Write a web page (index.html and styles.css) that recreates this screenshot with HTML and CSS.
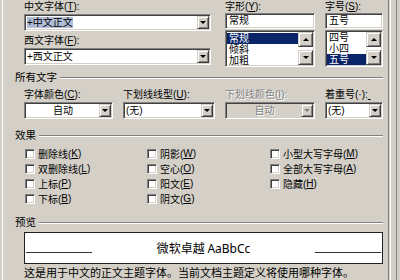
FILE: index.html
```html
<!DOCTYPE html>
<html>
<head>
<meta charset="utf-8">
<title>字体</title>
<link rel="stylesheet" href="styles.css">
</head>
<body>

<div class="dlg">
<div class="page">

<!-- polices -------------------------------------------------->
<div class="fonts">
	<div class="c1">
		<div class="lbl">中文字体(<u>T</u>):</div>
		<div class="combo"><span class="val"><span class="sel">+中文正文</span></span><span class="btn"><i></i></span></div>
		<div class="lbl lbl2">西文字体(<u>F</u>):</div>
		<div class="combo"><span class="val">+西文正文</span><span class="btn"><i></i></span></div>
	</div>
	<div class="c2">
		<div class="lbl">字形(<u>Y</u>):</div>
		<div class="edit">常规</div>
		<div class="list">
			<div class="items"><div class="hi">常规</div><div>倾斜</div><div>加粗</div></div>
			<div class="sb"><span class="btn"><i class="up"></i></span><span class="btn"><i></i></span></div>
		</div>
	</div>
	<div class="c3">
		<div class="lbl">字号(<u>S</u>):</div>
		<div class="edit">五号</div>
		<div class="list">
			<div class="items scrolled"><div>四号</div><div>小四</div><div class="hi">五号</div></div>
			<div class="sb"><span class="btn"><i class="up"></i></span><span class="btn"><i></i></span></div>
		</div>
	</div>
</div>

<!-- tout le texte -------------------------------------------->
<div class="grp"><span>所有文字</span></div>
<div class="fields">
	<div>
		<div class="lbl">字体颜色(<u>C</u>):</div>
		<div class="combo"><span class="val center">自动</span><span class="btn"><i></i></span></div>
	</div>
	<div>
		<div class="lbl">下划线线型(<u>U</u>):</div>
		<div class="combo"><span class="val">(无)</span><span class="btn"><i></i></span></div>
	</div>
	<div>
		<div class="lbl off">下划线颜色(<u>I</u>):</div>
		<div class="combo dis"><span class="val center">自动</span><span class="btn"><i></i></span></div>
	</div>
	<div>
		<div class="lbl">着重号(·):<u>&nbsp;</u></div>
		<div class="combo"><span class="val">(无)</span><span class="btn"><i></i></span></div>
	</div>
</div>

<!-- effets --------------------------------------------------->
<div class="grp gap"><span>效果</span></div>
<div class="checks">
	<div class="chk"><span class="box"></span>删除线(<u>K</u>)</div>
	<div class="chk"><span class="box"></span>阴影(<u>W</u>)</div>
	<div class="chk"><span class="box"></span>小型大写字母(<u>M</u>)</div>
	<div class="chk"><span class="box"></span>双删除线(<u>L</u>)</div>
	<div class="chk"><span class="box"></span>空心(<u>O</u>)</div>
	<div class="chk"><span class="box"></span>全部大写字母(<u>A</u>)</div>
	<div class="chk"><span class="box"></span>上标(<u>P</u>)</div>
	<div class="chk"><span class="box"></span>阳文(<u>E</u>)</div>
	<div class="chk"><span class="box"></span>隐藏(<u>H</u>)</div>
	<div class="chk"><span class="box"></span>下标(<u>B</u>)</div>
	<div class="chk"><span class="box"></span>阴文(<u>G</u>)</div>
</div>

<!-- aperçu --------------------------------------------------->
<div class="grp gap"><span>预览</span></div>
<div class="pv">
	<span class="ln"></span>
	<span class="txt">微软卓越 <span class="lat">AaBbCc</span></span>
	<span class="ln"></span>
</div>
<div class="note">这是用于中文的正文主题字体。当前文档主题定义将使用哪种字体。</div>

</div>
<div class="edge"></div>
</div>

</body>
</html>
```

FILE: styles.css
```css
body {margin:0; background:#d4d0c8; color:#000; overflow:hidden;
	font-family:"Liberation Sans","Noto Sans CJK SC",sans-serif; font-size:10px;}

.dlg {width:400px; height:280px; display:flex; overflow:hidden;}
.page {width:387px; height:280px; margin-left:2px; padding-left:12px; box-sizing:border-box;
	border-left:1px solid #fff; border-right:1px solid #808080;}
.edge {width:5px; margin-left:1px; border-left:1px solid #fff; border-right:1px solid #808080;}

.lbl {height:13px; line-height:13px; white-space:nowrap;}
.lbl2 {margin-top:3px;}
.off {color:#808080; text-shadow:1px 1px #fff;}

/* champs ------------------------------------------------- */
.combo {display:flex; height:17px; margin-top:1px; padding:1px; box-sizing:border-box; background:#fff;
	border:1px solid; border-color:#808080 #fff #fff #808080;
	box-shadow:inset 1px 1px #404040, inset -1px -1px #d4d0c8;}
.val {flex:1; line-height:13px; padding-left:1px; overflow:hidden; white-space:nowrap;}
.center {text-align:center;}
.sel {background:#b0bcd8;}
.dis {background:#d4d0c8;}
.dis .val {color:#808080; text-shadow:1px 1px #fff;}
.dis .btn i {border-top-color:#808080;}

.btn {width:12px; height:13px; flex:none; display:flex; align-items:center; justify-content:center;
	box-sizing:border-box; background:#d4d0c8;
	border:1px solid; border-color:#d4d0c8 #404040 #404040 #d4d0c8;
	box-shadow:inset 1px 1px #fff, inset -1px -1px #808080;}
.btn i {width:0; height:0; border-left:3px solid transparent; border-right:3px solid transparent;
	border-top:3px solid #000;}
.btn i.up {border-top:0; border-bottom:3px solid #000;}

.edit {height:16px; line-height:12px; padding:1px 3px; box-sizing:border-box; background:#fff;
	border:1px solid; border-color:#808080 #fff #fff #808080;
	box-shadow:inset 1px 1px #404040, inset -1px -1px #d4d0c8;}

.list {display:flex; height:37px; margin-top:1px; padding:1px; box-sizing:border-box; background:#fff;
	border:1px solid; border-color:#808080 #fff #fff #808080;
	box-shadow:inset 1px 1px #404040, inset -1px -1px #d4d0c8;}
.items {flex:1; overflow:hidden; padding-top:1px;}
.items div {height:11px; line-height:11px; padding-left:2px;}
.scrolled {padding-top:0;}
.hi {background:#0a246a; color:#fff;}
.sb {display:flex; flex-direction:column; justify-content:space-between; padding:0;}
.sb .btn {width:15px; height:15px;}

/* blocs -------------------------------------------------- */
.fonts {display:flex; margin-left:9px; height:71px;}
.c1 {width:187px;}
.c2 {width:90px; margin-left:14px;}
.c3 {width:58px; margin-left:10px;}

.grp {display:flex; align-items:center; width:368px; height:13px; line-height:13px;}
.grp span {padding-right:3px; font-size:10.5px;}
.grp:after {content:""; flex:1; border-top:1px solid #808080; border-bottom:1px solid #fff;}
.gap {margin-top:10px;}

.fields {display:grid; grid-template-columns:89px 92px 90px 58px; column-gap:10px; margin:4px 0 0 9px;}

.checks {display:grid; grid-template-columns:122px 123px 123px; margin:4px 0 0 10px; width:368px;}
.chk {display:flex; align-items:center; height:15px; white-space:nowrap;}
.box {width:10px; height:10px; margin-right:3px; box-sizing:border-box; background:#fff;
	border:1px solid; border-color:#808080 #fff #fff #808080;
	box-shadow:inset 1px 1px #404040, inset -1px -1px #d4d0c8;}

.pv {display:flex; align-items:center; width:359px; height:32px; margin:3px 0 0 9px; padding:0 1px;
	box-sizing:border-box; background:#fff; border:1px solid #202020;}
.ln {width:66px; height:1px; background:#333; margin-top:8px;}
.txt {flex:1; text-align:center; font-family:"Noto Sans CJK SC",sans-serif; font-size:12px; line-height:14px;}
.lat {font-family:"Noto Sans",sans-serif;}

.note {margin:2px 0 0 9px; font-size:11px; line-height:14px; white-space:nowrap;}
```
